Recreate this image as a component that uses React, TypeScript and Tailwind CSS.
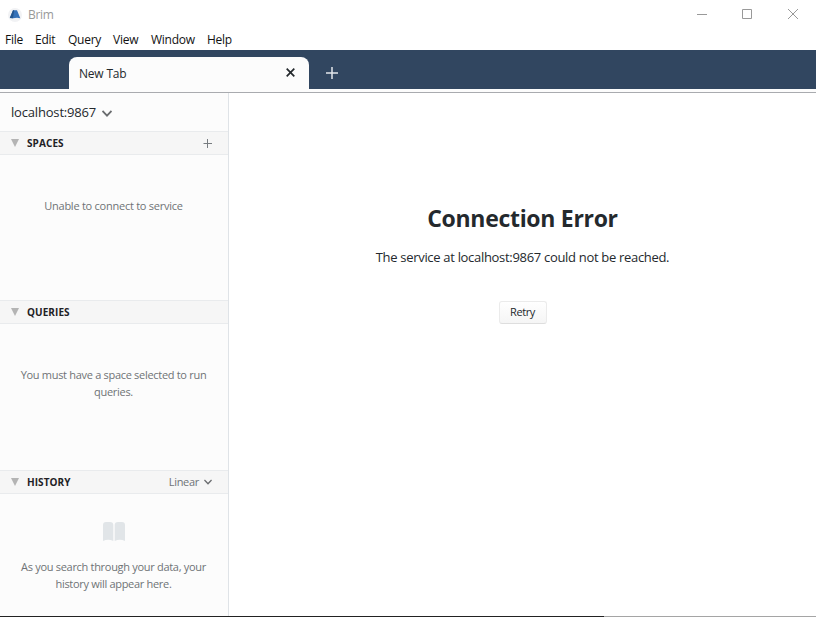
import type { ReactNode } from "react";

function Chevron({ className }: { className: string }) {
  return (
    <svg className={className} viewBox="0 0 10 7" fill="none" stroke="#6a6c6f" strokeWidth="1.8">
      <path d="M0.5 1 L5 5.6 L9.5 1" />
    </svg>
  );
}

function SectionHeader({ title, children }: { title: string; children?: ReactNode }) {
  return (
    <div className="flex h-6 shrink-0 items-center border-y border-[#e9ebed] bg-[#f6f6f6] pl-[11px]">
      <svg className="-mt-px h-2 w-2" viewBox="0 0 8 8">
        <path d="M0 0H8L4 8Z" fill="#b4b4b4" />
      </svg>
      <span className="ml-2 text-[10px] leading-none font-bold tracking-[0.08px] text-[#1f2225]">{title}</span>
      <div className="ml-auto flex items-center">{children}</div>
    </div>
  );
}

const menus = [
  { label: "File", style: "w-[30px]" },
  { label: "Edit", style: "w-[33px]" },
  { label: "Query", style: "w-[45px]" },
  { label: "View", style: "w-[38px]" },
  { label: "Window", style: "w-[56px]" },
  { label: "Help", style: "w-[30px]" },
];

export default function App() {
  return (
    <div className="flex h-[617px] w-[816px] flex-col overflow-hidden bg-white font-['Open_Sans','Noto_Sans',sans-serif] text-[#24292d]">
      <header className="flex h-[30px] shrink-0 items-center pl-2">
        <svg className="h-[14px] w-[14px]" viewBox="0 0 14 14">
          <circle cx="7" cy="7" r="7" fill="#f1f2f4" />
          <path d="M5 2.3H9L12.3 10.2L9 9.7L5 10.3L1.8 10Z" fill="#3471b8" />
          <path d="M5 2.3H6.2L5 10.3L1.8 10Z" fill="#24568f" />
        </svg>
        <span className="ml-[6px] text-[12px] leading-none tracking-[-0.3px] text-[#999]">Brim</span>
        <div className="mr-[17px] mb-[2px] ml-auto flex items-center text-[#999]">
          <svg className="h-[11px] w-[11px]" viewBox="0 0 11 11" stroke="currentColor"><path d="M0 5.5H10" shapeRendering="crispEdges" /></svg>
          <svg className="ml-[34px] h-[11px] w-[11px]" viewBox="0 0 11 11" fill="none" stroke="currentColor"><path d="M.5 .5H9.5V9.5H.5Z" /></svg>
          <svg className="ml-[35px] h-[11px] w-[11px]" viewBox="0 0 11 11" stroke="currentColor"><path d="M0 0L10 10M10 0L0 10" /></svg>
        </div>
      </header>
      <nav className="flex h-5 shrink-0 items-center pl-[5px] text-[12px] leading-none tracking-[-0.25px] text-[#111]">
        {menus.map((m) => <span key={m.label} className={m.style + " shrink-0 whitespace-nowrap"}>{m.label}</span>)}
      </nav>
      <div className="flex h-[39px] shrink-0 bg-[#314660] pl-[69px]">
        <div className="mt-[7px] flex h-8 w-60 items-center rounded-t-lg bg-[#fcfcfc] pr-[14px] pl-[10px]">
          <span className="mt-0.5 text-[12px] leading-none tracking-[-0.2px]">New Tab</span>
          <svg className="mb-px ml-auto h-[9px] w-[9px]" viewBox="0 0 9 9" stroke="#24292d" strokeWidth="1.7"><path d="M.7 .7L8.3 8.3M8.3 .7L.7 8.3" /></svg>
        </div>
        <svg className="mt-[17px] ml-[17px] h-3 w-3" viewBox="0 0 12 12" stroke="#e2e6ea" strokeWidth="1.5"><path d="M0 6H12M6 0V12" /></svg>
      </div>
      <div className="h-1 shrink-0 border-b border-[#a9abaf] bg-[#fcfcfc]" />
      <div className="flex min-h-0 grow">
        <aside className="flex w-[229px] shrink-0 flex-col border-r border-[#dfe3e7] bg-[#fcfcfc] text-[11px] tracking-[-0.3px] text-[#6f7376]">
          <div className="flex h-[38px] shrink-0 items-center pt-0.5 pl-[11px] text-[13px] font-medium text-[#24292d]">
            <span className="w-[85px] tracking-[-0.18px]">localhost:9867</span>
            <Chevron className="ml-[6px] h-[7px] w-[10px]" />
          </div>
          <SectionHeader title="SPACES">
            <svg className="mr-4 h-[9px] w-[9px]" viewBox="0 0 9 9" stroke="#777c80"><path d="M0.5 4.5H9M4.5 0V9" /></svg>
          </SectionHeader>
          <p className="h-[145px] shrink-0 pt-[42px] pr-px text-center leading-[17px] tracking-[-0.25px]">Unable to connect to service</p>
          <SectionHeader title="QUERIES" />
          <p className="h-[146px] shrink-0 pt-[42px] pr-px text-center leading-[17px]">You must have a space selected to run<br />queries.</p>
          <SectionHeader title="HISTORY">
            <span className="-mt-px text-[11px] leading-none">Linear</span>
            <Chevron className="mr-[16px] ml-[5px] h-[6px] w-[8px]" />
          </SectionHeader>
          <svg className="mt-7 ml-[103px] h-5 w-[22px] shrink-0" viewBox="0 0 22 20" fill="#e1e5e8">
            <path d="M0 3Q0 0 3 0H7Q10.3 0 10.3 3V19Q5.2 16.5 0 19Z" />
            <path d="M11.7 3Q11.7 0 15 0H19Q22 0 22 3V19Q16.8 16.5 11.7 19Z" />
          </svg>
          <p className="mt-4 pr-px text-center leading-[17px]">As you search through your data, your<br />history will appear here.</p>
        </aside>
        <main className="flex grow flex-col items-center">
          <h1 className="mt-[109px] text-[23px] leading-8 font-bold tracking-[-0.3px]">Connection Error</h1>
          <p className="mt-[13px] text-[13px] leading-5 tracking-[-0.31px]">The service at localhost:9867 could not be reached.</p>
          <button className="mt-[34px] h-[23px] w-12 rounded-[3px] border border-[#ebebeb] border-b-[#dedede] bg-linear-to-b from-white to-[#f5f5f5] pb-0.5 text-[11px] leading-none tracking-[-0.4px]">Retry</button>
        </main>
      </div>
      <div className="flex h-px shrink-0 bg-[#a5a5a5]"><div className="w-[604px] bg-[#222]" /></div>
    </div>
  );
}
